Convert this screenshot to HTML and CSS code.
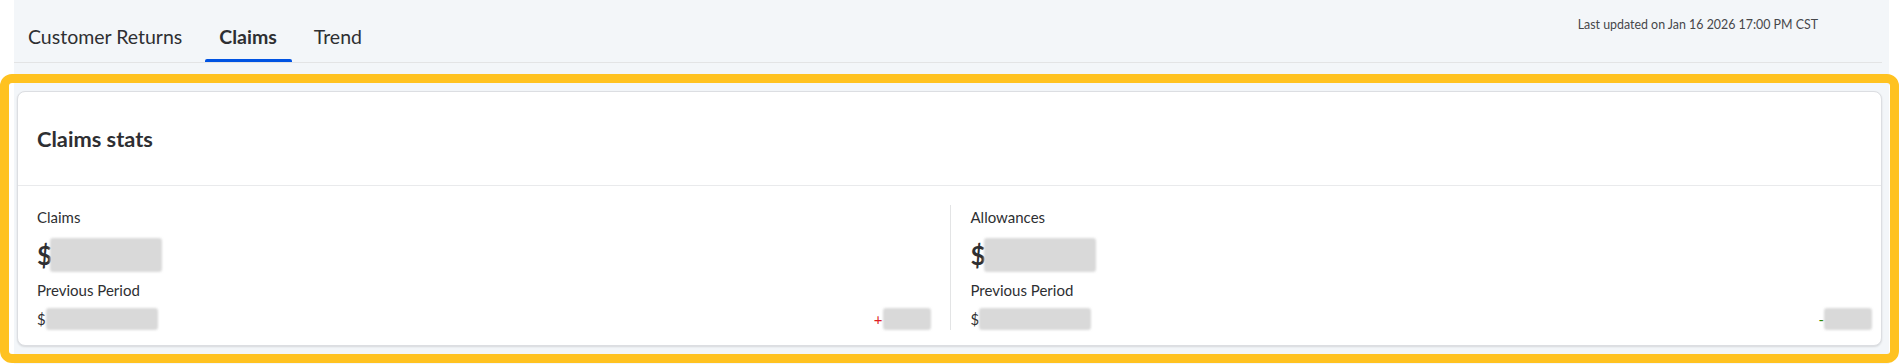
FILE: index.html
```html
<!DOCTYPE html>
<html lang="en">
<head>
    <meta charset="UTF-8">
    <meta name="viewport" content="width=device-width, initial-scale=1.0">
    <title>Claims</title>
    <link rel="stylesheet" href="styles.css">
</head>
<body>

    <div class="page">
        <div class="topbar">
            <nav class="tabs">
                <a class="tab">Customer Returns</a>
                <a class="tab active">Claims</a>
                <a class="tab">Trend</a>
            </nav>
            <div class="updated">Last updated on Jan 16 2026 17:00 PM CST</div>
        </div>

        <!-- Claims stats card -->
        <section class="card">
            <div class="card-head">
                <h2>Claims stats</h2>
            </div>
            <div class="card-body">
                <div class="stat">
                    <div class="stat-label">Claims</div>
                    <div class="stat-value">$<span class="redact big"></span></div>
                    <div class="stat-label prev">Previous Period</div>
                    <div class="stat-prev">
                        <span class="prev-val">$<span class="redact mid"></span></span>
                        <span class="delta up">+<span class="redact small"></span></span>
                    </div>
                </div>
                <div class="stat">
                    <div class="stat-label">Allowances</div>
                    <div class="stat-value">$<span class="redact big"></span></div>
                    <div class="stat-label prev">Previous Period</div>
                    <div class="stat-prev">
                        <span class="prev-val">$<span class="redact mid"></span></span>
                        <span class="delta down">-<span class="redact small"></span></span>
                    </div>
                </div>
            </div>
        </section>
    </div>

    <div class="highlight"></div>

</body>
</html>
```

FILE: styles.css
```css
body { margin: 0; background: #fff; font-family: Lato, "Open Sans", sans-serif; color: #2e2f32; }
.page { margin-left: 14px; width: 1875px; height: 364px; box-sizing: border-box; padding: 0 7px 0 3px; background: #f3f6f9; }

.topbar { display: flex; justify-content: space-between; height: 63px; box-sizing: border-box; margin-left: -3px; border-bottom: 1px solid #e3e4e5; }
.tabs { display: flex; gap: 8px; }
.tab { position: relative; display: flex; align-items: center; height: 62px; box-sizing: border-box; padding: 10px 15px 0 14px; font-size: 19.5px; color: #2e2f32; text-decoration: none; cursor: pointer; }
.tab.active { font-weight: 700; }
.tab.active::after { content: ""; position: absolute; left: 0; right: 0; bottom: 0; height: 3px; background: #0053e2; border-radius: 2px 2px 0 0; }
.updated { margin: 17px 64px 0 0; font-size: 12.4px; line-height: 16px; color: #46474a; }

.card { margin-top: 28px; background: #fff; border: 1px solid #dcdee2; border-radius: 8px; box-shadow: 0 1px 2px rgba(0, 0, 0, .12); }
.card-head { display: flex; align-items: center; height: 93px; padding: 0 19px; border-bottom: 1px solid #e9eaec; }
.card-head h2 { margin: 0; font-size: 21.8px; font-weight: 700; }
.card-body { display: grid; grid-template-columns: 1fr 1fr; padding: 19px 0 15px; }
.stat { padding: 2px 19px 0; }
.stat + .stat { border-left: 1px solid #e3e4e5; padding-left: 20px; padding-right: 9px; }
.stat-label { font-size: 15px; line-height: 20px; }
.stat-label.prev { margin-top: 7px; }
.stat-value { display: flex; align-items: center; height: 36px; margin-top: 10px; font-size: 26px; font-weight: 700; line-height: 36px; }
.stat-value .redact { margin-left: -2px; }
.stat-prev { display: flex; justify-content: space-between; align-items: center; height: 22px; margin-top: 8px; font-size: 15px; line-height: 22px; }
.prev-val, .delta { display: flex; align-items: center; }
.delta.up { color: #de1c24; }
.delta.down { color: #2a8703; }

.redact { display: inline-block; background: #d9d9d9; border-radius: 3px; filter: blur(1px); }
.redact.big { width: 112px; height: 34px; }
.redact.mid { width: 112px; height: 22px; }
.redact.small { width: 48px; height: 22px; }

.highlight { position: absolute; left: 0; top: 74px; width: 1899px; height: 289px; box-sizing: border-box; border: 9px solid #ffc220; border-radius: 12px; pointer-events: none; }
```
